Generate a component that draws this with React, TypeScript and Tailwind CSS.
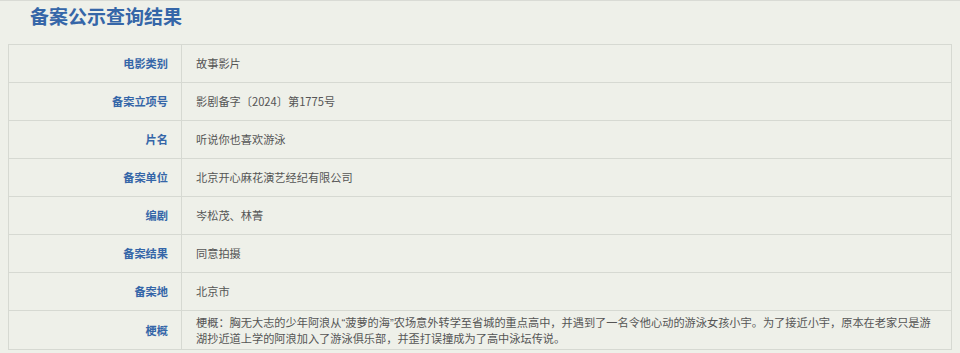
import React from "react";

const Q = ({ c }: { c: string }) => (
  <span style={{ fontFamily: '"Liberation Sans", sans-serif' }}>{c}</span>
);

const rows: { label: string; value: React.ReactNode }[] = [
  { label: "电影类别", value: "故事影片" },
  { label: "备案立项号", value: "影剧备字〔2024〕第1775号" },
  { label: "片名", value: "听说你也喜欢游泳" },
  { label: "备案单位", value: "北京开心麻花演艺经纪有限公司" },
  { label: "编剧", value: "岑松茂、林菁" },
  { label: "备案结果", value: "同意拍摄" },
  { label: "备案地", value: "北京市" },
  {
    label: "梗概",
    value: (
      <>
        梗概：胸无大志的少年阿浪从<Q c="“" />菠萝的海<Q c="”" />
        农场意外转学至省城的重点高中，并遇到了一名令他心动的游泳女孩小宇。为了接近小宇，原本在老家只是游湖抄近道上学的阿浪加入了游泳俱乐部，并歪打误撞成为了高中泳坛传说。
      </>
    ),
  },
];

export default function App() {
  return (
    <div
      className="w-[960px] h-[353px] overflow-hidden bg-[#eef0e9] border-t border-[#d9dbd5]"
      style={{ fontFamily: '"Microsoft YaHei", "Noto Sans CJK SC", "Noto Sans", sans-serif' }}
    >
      <div className="pl-[30px] h-[28px] flex items-center">
        <h1 className="text-[19px] font-bold text-[#3566a8] leading-none">备案公示查询结果</h1>
      </div>
      <div className="mt-[15px] ml-[8px] w-[944px] border border-[#d6d9d2]">
        {rows.map((r, i) => (
          <div
            key={i}
            className={
              "flex h-[38px] " + (i < rows.length - 1 ? "border-b border-[#d6d9d2]" : "")
            }
          >
            <div className="w-[173px] shrink-0 border-r border-[#d6d9d2] flex items-center justify-end pr-[13px] text-[11.2px] font-bold text-[#3566a8]">
              {r.label}
            </div>
            <div className="flex-1 flex items-center pl-[14px] pr-[12px] text-[11.2px] leading-[14.5px] text-[#555555]">
              <span>{r.value}</span>
            </div>
          </div>
        ))}
      </div>
    </div>
  );
}
